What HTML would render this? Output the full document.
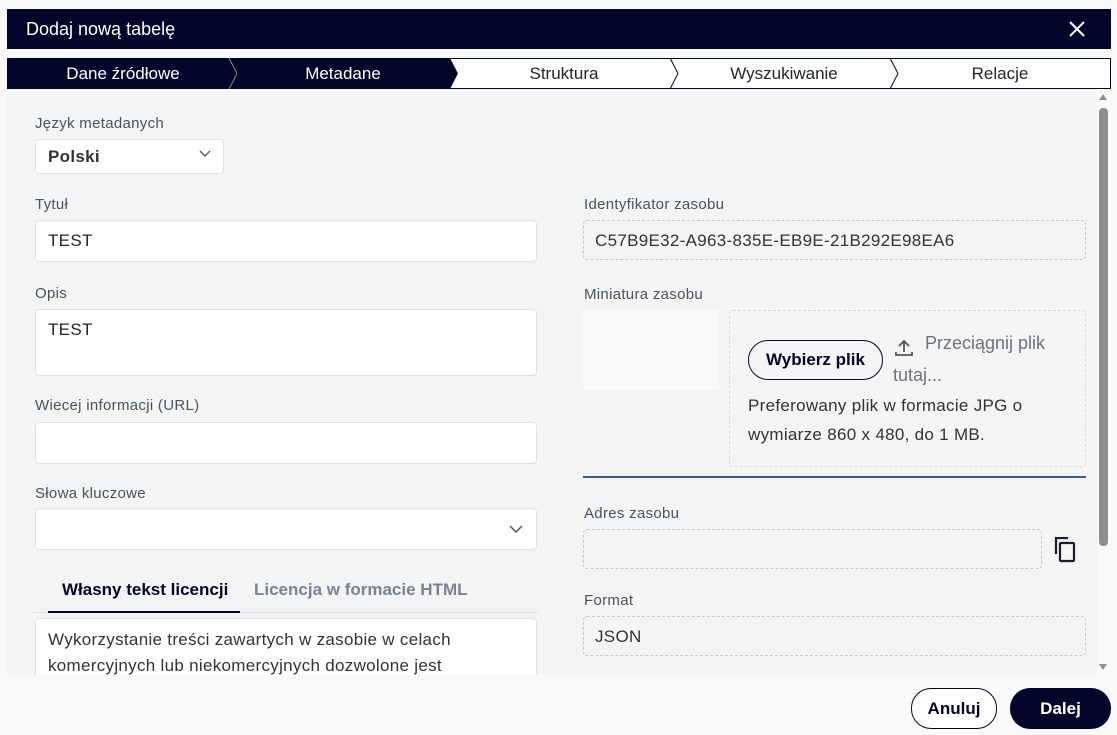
<!DOCTYPE html>
<html><head><meta charset="utf-8"><style>
*{box-sizing:border-box;margin:0;padding:0}
body{width:1117px;height:735px;background:#f9f9f9;font-family:"Liberation Sans",sans-serif;position:relative;overflow:hidden;color:#212529}
.a{position:absolute}
.hdr{left:7px;top:9px;width:1104px;height:40px;background:#020529;color:#fff;font-size:18px;line-height:40px;padding-left:19px}
.content{left:7px;top:89px;width:1090px;height:586px;background:#f4f4f4}
.lbl{font-size:15px;color:#4a5260;letter-spacing:.3px}
.inp{background:#fff;border:1px solid #dde1e6;border-radius:4px;font-size:17px;padding-left:12px;color:#212529;letter-spacing:.3px}
.ro{border:1px dashed #c4c8cf;border-radius:4px;font-size:17px;padding-left:11px;color:#333;background:#f4f4f4;letter-spacing:.3px}
.btn{border-radius:20px;font-weight:bold;font-size:17px;text-align:center}
</style></head><body>
<div class="a hdr">Dodaj nową tabelę</div>
<svg class="a" style="left:1068px;top:20px" width="18" height="18" viewBox="0 0 18 18"><path d="M2 2L16 16M16 2L2 16" stroke="#fff" stroke-width="2"/></svg>
<svg class="a" style="left:7px;top:58px" width="1104" height="31" viewBox="0 0 1104 31">
<rect x="0.5" y="0.5" width="1103" height="30" fill="#fff" stroke="#020529"/>
<polygon points="0,0 443,0 451,15.5 443,31 0,31" fill="#020529"/>
<path d="M222 0L230 15.5L222 31" stroke="#888" fill="none"/>
<path d="M663 0L671 15.5L663 31M883 0L891 15.5L883 31" stroke="#020529" fill="none"/>
<g font-family="Liberation Sans" font-size="17" text-anchor="middle">
<text x="116" y="21" fill="#fff">Dane źródłowe</text>
<text x="336" y="21" fill="#fff">Metadane</text>
<text x="557" y="21" fill="#212529">Struktura</text>
<text x="777" y="21" fill="#212529">Wyszukiwanie</text>
<text x="993" y="21" fill="#212529">Relacje</text></g></svg>
<div class="a content"></div>
<div class="a" style="left:1099px;top:108px;width:9px;height:438px;background:#8e8e8e;border-radius:4px"></div>
<div class="a" style="left:1099px;top:94px;width:0;height:0;border:4px solid transparent;border-bottom:6px solid #8e8e8e;border-top:0"></div>
<div class="a" style="left:1099px;top:664px;width:0;height:0;border:4px solid transparent;border-top:6px solid #8e8e8e;border-bottom:0"></div>

<div class="a lbl" style="left:35px;top:115px">Język metadanych</div>
<div class="a inp" style="left:35px;top:139px;width:189px;height:35px;line-height:33px;font-weight:bold;color:#333">Polski</div>
<svg class="a" style="left:199px;top:150px" width="12" height="8"><path d="M1 1L6 6L11 1" stroke="#555" fill="none" stroke-width="1.3"/></svg>

<div class="a lbl" style="left:35px;top:196px">Tytuł</div>
<div class="a inp" style="left:35px;top:220px;width:502px;height:42px;line-height:40px">TEST</div>
<div class="a lbl" style="left:35px;top:285px">Opis</div>
<div class="a inp" style="left:35px;top:309px;width:502px;height:67px;padding-top:10px">TEST</div>
<div class="a lbl" style="left:35px;top:397px">Wiecej informacji (URL)</div>
<div class="a inp" style="left:35px;top:422px;width:502px;height:42px"></div>
<div class="a lbl" style="left:35px;top:485px">Słowa kluczowe</div>
<div class="a inp" style="left:35px;top:508px;width:502px;height:42px"></div>
<svg class="a" style="left:509px;top:525px" width="14" height="9"><path d="M1 1L7 7L13 1" stroke="#555" fill="none" stroke-width="1.5"/></svg>

<div class="a" style="left:62px;top:580px;font-size:17px;font-weight:bold;color:#020529">Własny tekst licencji</div>
<div class="a" style="left:254px;top:580px;font-size:17px;font-weight:bold;color:#7b8290">Licencja w formacie HTML</div>
<div class="a" style="left:33px;top:612px;width:505px;height:1px;background:#dde1e6"></div>
<div class="a" style="left:48px;top:611px;width:192px;height:2px;background:#020529"></div>
<div class="a inp" style="left:35px;top:618px;width:502px;height:57px;border-bottom:0;border-radius:4px 4px 0 0;padding-top:8px;line-height:26px;color:#333;overflow:hidden;white-space:nowrap">Wykorzystanie treści zawartych w zasobie w celach<br>komercyjnych lub niekomercyjnych dozwolone jest</div>

<div class="a lbl" style="left:584px;top:196px">Identyfikator zasobu</div>
<div class="a ro" style="left:583px;top:220px;width:503px;height:40px;line-height:40px">C57B9E32-A963-835E-EB9E-21B292E98EA6</div>
<div class="a lbl" style="left:584px;top:286px">Miniatura zasobu</div>
<div class="a" style="left:583px;top:310px;width:136px;height:80px;background:#f9f9f9"></div>
<div class="a" style="left:729px;top:310px;width:357px;height:157px;border:1px dashed #d5d8dd;border-radius:4px"></div>
<div class="a btn" style="left:748px;top:340px;width:135px;height:40px;line-height:38px;border:1px solid #020529;color:#020529;background:#f4f4f4">Wybierz plik</div>
<svg class="a" style="left:893px;top:337px" width="22" height="22" viewBox="0 0 22 22"><path d="M11 15V4M6 9L11 4L16 9M3 15V18H19V15" stroke="#555" stroke-width="1.8" fill="none"/></svg>
<div class="a" style="left:925px;top:333px;font-size:18px;color:#6b7280">Przeciągnij plik</div>
<div class="a" style="left:893px;top:365px;font-size:18px;color:#6b7280">tutaj...</div>
<div class="a" style="left:748px;top:391px;font-size:17px;line-height:29px;color:#333;letter-spacing:.3px">Preferowany plik w formacie JPG o<br>wymiarze 860 x 480, do 1 MB.</div>
<div class="a" style="left:583px;top:476px;width:503px;height:2px;background:#3a5a9a"></div>
<div class="a lbl" style="left:584px;top:505px">Adres zasobu</div>
<div class="a ro" style="left:583px;top:529px;width:459px;height:40px"></div>
<svg class="a" style="left:1053px;top:537px" width="24" height="26" viewBox="0 0 24 26"><path d="M15 1H3V17" stroke="#1a1d2e" stroke-width="2.2" fill="none"/><rect x="7" y="6" width="14" height="18" rx="1" stroke="#1a1d2e" stroke-width="2.2" fill="none"/></svg>
<div class="a lbl" style="left:584px;top:592px">Format</div>
<div class="a ro" style="left:583px;top:616px;width:503px;height:40px;line-height:40px">JSON</div>

<div class="a btn" style="left:911px;top:688px;width:86px;height:41px;line-height:39px;border:1px solid #020529;color:#020529;background:#fff">Anuluj</div>
<div class="a btn" style="left:1010px;top:688px;width:101px;height:41px;line-height:41px;background:#020529;color:#fff">Dalej</div>
</body></html>
